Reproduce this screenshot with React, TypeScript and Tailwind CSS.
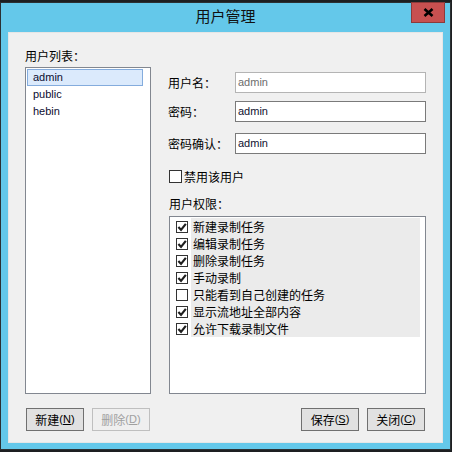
import React from 'react';

const font = "font-['Liberation_Sans','Noto_Sans_CJK_SC',sans-serif]";
const cjk = "font-['Noto_Sans_CJK_SC',sans-serif]";

const users = ['admin', 'public', 'hebin'];

const perms = [
  { label: '新建录制任务', checked: true },
  { label: '编辑录制任务', checked: true },
  { label: '删除录制任务', checked: true },
  { label: '手动录制', checked: true },
  { label: '只能看到自己创建的任务', checked: false },
  { label: '显示流地址全部内容', checked: true },
  { label: '允许下载录制文件', checked: true },
];

function CheckBox({ checked, size = 12 }: { checked: boolean; size?: number }) {
  return (
    <svg width={size} height={size} viewBox={`0 0 ${size} ${size}`} className="shrink-0">
      <rect x="0.5" y="0.5" width={size - 1} height={size - 1} fill="#fff" stroke="#333" />
      {checked && (
        <path
          d={`M${size * 0.2} ${size * 0.5} L${size * 0.42} ${size * 0.74} L${size * 0.82} ${size * 0.24}`}
          fill="none"
          stroke="#1e1e1e"
          strokeWidth="2.2"
        />
      )}
    </svg>
  );
}

function Field({ label, value, disabled, className }: { label: string; value: string; disabled?: boolean; className?: string }) {
  return (
    <div className={`flex items-center h-[21px] ${className ?? ''}`}>
      <div className={`w-[66px] -ml-[1px] text-[12px] leading-[17px] text-black ${cjk}`}>{label}</div>
      <div
        className={`w-[191px] ml-[1px] h-[21px] bg-white border flex items-center pl-[2px] text-[11px] ${
          disabled ? 'border-[#b4b4b4] text-[#6d6d6d]' : 'border-[#7a7a7a] text-[#101030]'
        }`}
      >
        {value}
      </div>
    </div>
  );
}

function Btn({ text, key_, disabled, className }: { text: string; key_: string; disabled?: boolean; className?: string }) {
  return (
    <div
      className={`w-[58px] h-[23px] border flex items-center justify-center text-[12px] leading-[17px] ${
        disabled ? 'border-[#bfbfbf] bg-[#efefef] text-[#a0a0a0]' : 'border-[#707070] bg-[#e1e1e1] text-black'
      } ${className ?? ''}`}
    >
      <span className={cjk}>{text}</span>
      <span className="text-[11px]">
        (<span className="underline">{key_}</span>)
      </span>
    </div>
  );
}

export default function App() {
  return (
    <div className={`min-h-screen bg-[#1d1f21] pt-[2px] ${font}`}>
      <div className="relative w-[451px] h-[448px] border border-[#2b3033] bg-[#64c8ea] flex flex-col">
        {/* close */}
        <div className="absolute top-[-1px] right-[5px] w-[34px] h-[21px] bg-[#c75050] border border-[#8c3a3a] flex items-center justify-center">
          <svg width="11" height="9" viewBox="0 0 11 9">
            <path d="M1.5 1 L9.5 8 M9.5 1 L1.5 8" stroke="#000" strokeWidth="2.6" fill="none" />
          </svg>
        </div>

        {/* title */}
        <div className={`h-[29px] flex items-center justify-center pb-[3px] text-[15px] text-[#111] ${cjk}`}>用户管理</div>

        {/* body */}
        <div className="mx-[7px] mb-[6px] flex-1 bg-[#f0f0f0] border border-[#e6e6e6] flex flex-col">
          <div className="flex pl-[16px]">
            {/* user list */}
            <div className="w-[126px] flex flex-col">
              <div className={`mt-[14px] h-[17px] leading-[17px] text-[12px] text-black ${cjk}`}>用户列表：</div>
              <div className="mt-[3px] h-[327px] bg-white border border-[#828790] pt-[1px] pl-[1px]">
                {users.map((u, i) => (
                  <div
                    key={u}
                    className={`w-[116px] h-[17px] flex items-center pl-[5px] text-[11px] text-[#0c0c30] border ${
                      i === 0 ? 'bg-[#dbeafc] border-[#84acdd]' : 'border-transparent'
                    }`}
                  >
                    {u}
                  </div>
                ))}
              </div>
            </div>

            {/* details */}
            <div className="w-[257px] ml-[18px] flex flex-col">
              <Field label="用户名：" value="admin" disabled className="mt-[39px]" />
              <Field label="密码：" value="admin" className="mt-[8px]" />
              <Field label="密码确认：" value="admin" className="mt-[11px]" />

              <div className="mt-[16px] h-[13px] flex items-center">
                <CheckBox checked={false} size={13} />
                <span className={`ml-[2px] text-[12px] leading-[17px] text-black ${cjk}`}>禁用该用户</span>
              </div>

              <div className={`mt-[12px] h-[17px] leading-[17px] text-[12px] text-black ${cjk}`}>用户权限：</div>

              <div className="mt-[4px] h-[178px] bg-white border border-[#828790] pt-[1px]">
                {perms.map((p) => (
                  <div key={p.label} className="h-[17px] flex items-center pl-[6px] pr-[5px]">
                    <CheckBox checked={p.checked} />
                    <div className={`ml-[3px] flex-1 h-[17px] bg-[#ebebeb] pl-[2px] text-[12px] leading-[17px] text-black ${cjk}`}>
                      {p.label}
                    </div>
                  </div>
                ))}
              </div>
            </div>
          </div>

          {/* buttons */}
          <div className="mt-[14px] flex px-[17px]">
            <Btn text="新建" key_="N" />
            <Btn text="删除" key_="D" disabled className="ml-[8px]" />
            <div className="flex-1" />
            <Btn text="保存" key_="S" />
            <Btn text="关闭" key_="C" className="ml-[8px]" />
          </div>
        </div>
      </div>
    </div>
  );
}
